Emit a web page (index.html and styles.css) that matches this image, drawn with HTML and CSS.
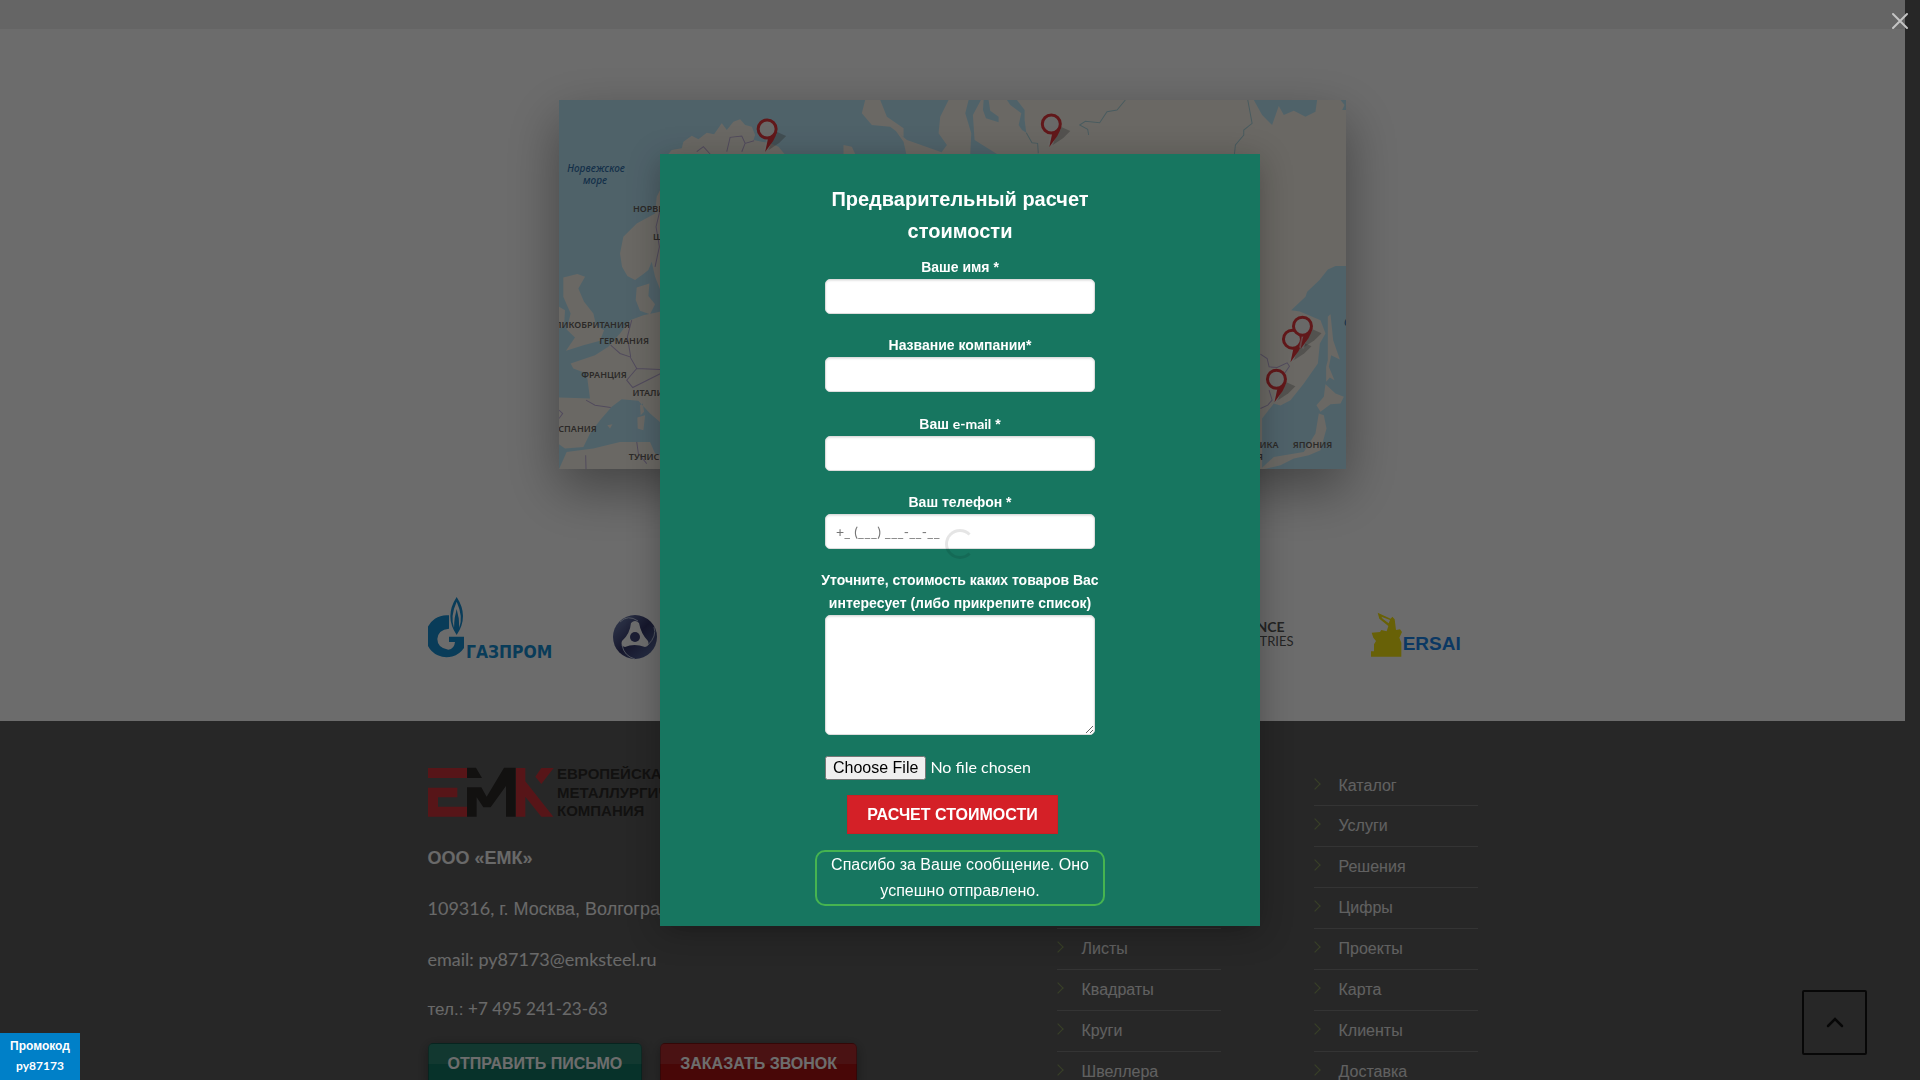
FILE: index.html
```html
<!DOCTYPE html>
<html lang="ru">
<head>
<meta charset="utf-8">
<meta name="viewport" content="width=device-width, initial-scale=1">
<title>Европейская металлургическая компания</title>
<link rel="stylesheet" href="styles.css">
</head>
<body>
<div class="page">
  <main class="main">
    <div class="strip"></div>
    <section class="geography">
      <svg class="map" viewBox="0 0 787 369" role="img" aria-label="Карта поставок">
        <defs>
          <g id="pin">
            <path d="M0 33L10 14L19 18L12 25Z" fill="#555" opacity=".35"/>
            <path d="M-1 33L2 20" stroke="#fff" stroke-width="5" opacity=".5"/>
            <circle r="9" fill="#f6f4f2" cy="11" stroke="#e22b31" stroke-width="3"/>
            <path d="M10 13Q9 18 6 23L-2 34L1 20Q6 18 9 13Z" fill="#e22b31"/>
          </g>
        </defs>
        <rect width="787" height="369" fill="#b5e4f6"/>
        <g transform="translate(-19 -20) scale(.33333)" fill="#f8f3e8">
          <path d="M385 222L395 210L425 205L430 185L455 167L475 178L500 158L522 163L545 130L560 150L580 125L600 118L615 135L635 140L645 165L640 180L690 190L715 200L740 230L740 640H365L345 590L335 545L325 570L310 582L285 600L262 588L246 560L240 520L250 470L290 430L345 400L350 350L360 330Z"/>
          <path d="M70 592L112 582L135 590L115 625L132 665L160 700L168 735L192 750L180 782L130 795L78 812L105 772L80 748L92 700L70 650ZM57 680L75 690L72 738L57 745ZM290 622L328 610L325 648L345 672L330 702L300 692L287 660Z"/>
          <path d="M380 690L310 705L270 720L240 760L205 800L165 825L92 850L100 865L140 880L150 955L57 952V1092L75 1105L130 1100L150 1060L180 1020L215 980L245 957L295 962L330 1000L365 1030L380 1030ZM57 1167L80 1115L160 1105L240 1085L330 1085L345 1120L380 1130V1167ZM300 975L308 970L312 995L302 1005ZM292 1012L315 1005L310 1050L293 1045ZM202 1035L217 1032L210 1045Z"/>
          <g fill="none" stroke="#b9a9d6" stroke-width="3">
            <path d="M470 215L490 200L510 222M560 215L570 172L605 168L615 190L605 215M615 190L642 182M360 390L348 440L358 500L345 560M212 795L240 820L270 830L290 865L360 868M290 865L260 900L278 922L362 880M138 960L165 975L212 982M290 1085L295 1120L320 1150M137 1125L138 1167M57 990L68 1000L57 1015M275 720L262 770L272 830"/>
          </g>
        </g>
        <g transform="translate(281 -10) scale(.33333)">
          <path fill="#f8f3e8" d="M75 30H120L140 80L190 115L190 140L150 110L95 105L65 70ZM165 120L200 150L300 185L330 200H200L190 155ZM10 165L35 170L45 192H10ZM325 30H1520V192H300L320 165L295 130L300 80ZM1100 190H1520V1150H1100Z"/>
          <path fill="#b5e4f6" d="M385 30H422L398 75L403 150L470 192H390L393 130L375 70ZM430 30H445L450 62L475 80L475 97L437 85L428 60ZM500 30H530L553 60L553 90L558 128L545 120L535 105L543 70L510 45ZM1240 30H1430L1425 65L1395 80L1360 62L1330 75L1315 48L1295 105L1265 75ZM1500 30H1520V60H1505L1512 45Z"/>
          <path fill="none" stroke="#a5d2dc" stroke-width="3" d="M855 30L830 60L800 65L778 98L735 94L718 105L742 118L745 135M558 128L575 158L592 160L594 190M1222 30L1235 100L1210 120V135L1185 165L1182 192"/>
        </g>
        <g transform="translate(681 -20) scale(.33333)">
          <path fill="#b5e4f6" d="M318 558H285L262 568L237 600L200 635L195 650L152 690L178 694L240 720L255 760L238 790L232 850L190 910L150 960L120 976L100 970L65 1015V1167H318Z"/>
          <path fill="#f8f3e8" d="M262 710L270 702L278 780L298 838L272 825L265 860L282 900L268 892L257 905V860L262 840ZM255 912L285 940L310 950L300 970L270 972L240 995L228 975L250 950ZM235 1000L250 1005L258 1045L240 1110L205 1125L160 1135L120 1155L70 1167H60L100 1130L190 1115L225 1060Z"/>
          <path fill="none" stroke="#b9a9d6" stroke-width="3" d="M60 822L80 835L86 860L110 862L140 848L147 858L132 880M86 930L95 960L82 975L60 985"/>
        </g>
        <g class="sea-name"><text x="37" y="72">Норвежское</text><text x="36" y="84">море</text><text x="788" y="226">О</text></g>
        <g class="country">
          <text x="98" y="112">НОРВЕГИЯ</text><text x="114" y="140">ШВЕЦИЯ</text><text x="28" y="228">ВЕЛИКОБРИТАНИЯ</text>
          <text x="65" y="244">ГЕРМАНИЯ</text><text x="45" y="278">ФРАНЦИЯ</text><text x="92" y="296">ИТАЛИЯ</text>
          <text x="15" y="332">ИСПАНИЯ</text><text x="85" y="360">ТУНИС</text><text x="753" y="348">ЯПОНИЯ</text>
          <text x="689" y="348">РЕСПУБЛИКА</text><text x="689" y="360">КОРЕЯ</text>
        </g>
        <use href="#pin" x="208" y="18"/><use href="#pin" x="492" y="13"/>
        <use href="#pin" x="733" y="228"/><use href="#pin" x="743" y="215"/><use href="#pin" x="717" y="268"/>
      </svg>
    </section>
    <section class="partners">
      <svg class="partner" width="126" height="64" viewBox="84 52 378 192" role="img" aria-label="Газпром">
        <g fill="#0784cc">
          <path d="M147 107A63 63 0 1 0 192 205V171H147V187H165Q163 208 145 210Q112 205 112 178Q114 150 147 147Z"/>
          <path fill-rule="evenodd" d="M170 52Q208 110 170 166Q132 110 170 52ZM170 66Q150 110 162 144Q162 115 170 88Q178 115 178 144Q190 110 170 66Z"/>
          <path d="M170 100Q182 130 170 158Q158 130 170 100Z"/>
          <text x="198" y="234" class="gazprom-name">ГАЗПРОМ</text>
        </g>
      </svg>
      <svg class="partner partner-atom" width="46" height="46" viewBox="0 0 46 46" role="img" aria-label="Росатом">
        <defs><linearGradient id="atom" x1="0" y1="0" x2="1" y2="1"><stop offset="0" stop-color="#6f83b5"/><stop offset=".5" stop-color="#26295e"/><stop offset="1" stop-color="#5a70a8"/></linearGradient></defs>
        <circle cx="23" cy="23" r="22" fill="url(#atom)"/>
        <g fill="none" stroke="#b9c3dc"><path d="M26 7Q16 0 8 8M36 31Q45 22 42 13M10 31Q12 42 23 45"/></g>
        <path fill="#fff" d="M19 9Q23 5 27 9Q29 20 36 27Q38 32 33 33Q22 29 13 33Q8 32 10 27Q18 20 19 9Z"/>
        <circle cx="23" cy="23" r="5" fill="#333a72"/>
      </svg>
      <div class="reliance"><b>RELIANCE</b><span>INDUSTRIES</span></div>
      <svg class="partner partner-ersai" width="90" height="46" viewBox="393 98 270 138" role="img" aria-label="Ersai">
        <path fill="#f3e000" d="M393 216H402V195L408 185L400 175L395 160L420 158L424 152L440 156L445 140L418 118L413 100L452 118L457 112L464 120L468 152L480 150L486 158L478 175L484 190V232H393ZM424 112L428 118L446 132L450 122Z"/>
        <text x="488" y="213" class="ersai-name">ERSAI</text>
      </svg>
    </section>
  </main>
  <footer class="footer">
    <div class="company">
      <svg class="logo" width="260" height="52" viewBox="84 562 780 156" role="img" aria-label="ЕМК">
        <path fill="#c8252b" d="M84 568H201V598H84ZM84 627H172V656H114V684H201V714H84ZM347 568H376V608L460 714H424L376 654V714H347ZM424 568H461L424 616L406 594Z"/>
        <path fill="#1c1a18" d="M201 567H228L246 598H201ZM201 626H244L260 654L312 567H347V714H318V622L272 686H250L230 656V714H201Z"/>
        <g class="logo-name"><text x="471" y="600">ЕВРОПЕЙСКАЯ</text><text x="471" y="657">МЕТАЛЛУРГИЧЕСКАЯ</text><text x="471" y="713">КОМПАНИЯ</text></g>
      </svg>
      <p><strong>ООО «ЕМК»</strong></p>
      <p><span class="latin">109316,</span> г. Москва, Волгоградский проспект</p>
      <p class="latin">email: py87173@emksteel.ru</p>
      <p class="phone">тел.: <span class="latin">+7 495 241-23-63</span></p>
      <div class="actions">
        <button type="button" class="glossy glossy-green">Отправить письмо</button>
        <button type="button" class="glossy glossy-red">Заказать звонок</button>
      </div>
    </div>
    <ul class="menu">
      <li><a href="#">Трубы</a></li><li><a href="#">Балки</a></li><li><a href="#">Арматура</a></li><li><a href="#">Уголки</a></li>
      <li><a href="#">Листы</a></li><li><a href="#">Квадраты</a></li><li><a href="#">Круги</a></li><li><a href="#">Швеллера</a></li>
    </ul>
    <ul class="menu">
      <li><a href="#">Каталог</a></li><li><a href="#">Услуги</a></li><li><a href="#">Решения</a></li><li><a href="#">Цифры</a></li>
      <li><a href="#">Проекты</a></li><li><a href="#">Карта</a></li><li><a href="#">Клиенты</a></li><li><a href="#">Доставка</a></li>
    </ul>
  </footer>
</div>
<a href="#" class="to-top" aria-label="Наверх"><svg width="18" height="11" viewBox="0 0 18 11"><path d="M2 9L9 2L16 9" fill="none" stroke="#000" stroke-width="2.5" stroke-linecap="round"/></svg></a>

<div class="overlay">
  <div class="modal" role="dialog" aria-modal="true" aria-labelledby="modal-title">
    <form class="quote">
      <h2 id="modal-title">Предварительный расчет стоимости</h2>
      <label for="name">Ваше имя *</label>
      <input class="field" type="text" id="name">
      <label for="company">Название компании*</label>
      <input class="field" type="text" id="company">
      <label for="email">Ваш <span class="latin">e-mail</span> *</label>
      <input class="field" type="email" id="email">
      <label for="phone">Ваш телефон *</label>
      <input class="field" type="tel" id="phone" placeholder="+_ (___) ___-__-__">
      <label for="details">Уточните, стоимость каких товаров Вас интересует (либо прикрепите список)</label>
      <textarea class="field" id="details"></textarea>
      <input class="file" type="file" aria-label="Прикрепить список">
      <button type="submit" class="submit">Расчет стоимости</button>
      <p class="sent" role="status">Спасибо за Ваше сообщение. Оно успешно отправлено.</p>
    </form>
  </div>
  <span class="spinner"></span>
  <button type="button" class="close" aria-label="Закрыть"><svg width="18" height="18" viewBox="0 0 18 18"><path d="M2 2L16 16M16 2L2 16" stroke="#c4c4c4" stroke-width="2" stroke-linecap="round"/></svg></button>
</div>
<aside class="promo"><span>Промокод</span><span class="latin">py87173</span></aside>
</body>
</html>
```

FILE: styles.css
```css
* { box-sizing: border-box; }

body {
  margin: 0;
  height: 100vh;
  overflow: hidden;
  background: #515151;
  color: #fff;
  font: 16px/26px "Liberation Sans", Arial, sans-serif;
}

a { color: inherit; text-decoration: none; }
button, input, textarea { font: inherit; }
.latin { font-family: Lato, "Liberation Sans", sans-serif; }

/* the page keeps room for the scrollbar while the dialog is open */
.page { margin-right: 15px; }
.main { background: #fdfdfd; }
.strip { height: 29px; background: #ececec; }

.geography { padding: 71px 15px 0; }
.map {
  display: block;
  width: 42%;
  margin: 0 auto;
  box-shadow: 0 20px 50px rgba(0, 0, 0, .4);
}
.country { font: 600 9px "Noto Sans", sans-serif; fill: #5c5753; text-anchor: middle; }
.sea-name { font: italic 500 10px "Noto Sans", sans-serif; fill: #2467a6; text-anchor: middle; }

.partners {
  display: flex;
  align-items: center;
  max-width: 1050px;
  margin: 0 auto;
  padding: 128px 0 60px;
}
.partner { flex: none; }
.partner-atom { margin: 16px 0 0 58px; }
.gazprom-name { font: bold 52px "DejaVu Sans Condensed", "Liberation Sans", sans-serif; }
.ersai-name { font: bold 57px "Liberation Sans", sans-serif; fill: #0b7be6; }
.reliance {
  display: flex;
  flex-direction: column;
  margin: 10px 77px 0 auto;
  color: #4a4a4a;
  text-align: right;
  font: 13px/14px Lato, sans-serif;
}
.reliance b { padding-right: 9px; font-size: 14px; }
.partner-ersai { margin: 12px 17px 0 0; }

.footer {
  display: grid;
  grid-template-columns: 1fr 164px 164px;
  column-gap: 93px;
  max-width: 1050px;
  margin: 0 auto;
  padding-top: 45px;
}
.company { min-width: 0; color: #f4f4f4; font-size: 18px; line-height: 29px; }
.company p { margin: 0 0 21px; white-space: nowrap; }
.company .phone { margin-bottom: 20px; font-size: 17px; line-height: 27px; }
.logo { display: block; margin-bottom: 26px; }
.logo-name { font: bold 45px "Liberation Sans", sans-serif; fill: #1c1a18; }
.actions { display: flex; gap: 18px; }

.glossy {
  height: 42px;
  padding: 0 19px;
  border: 1px solid rgba(0, 0, 0, .3);
  border-radius: 5px;
  color: #fff;
  font-size: 16px;
  font-weight: bold;
  line-height: 38px;
  text-transform: uppercase;
  box-shadow: 0 3px 12px rgba(0, 0, 0, .4);
}
.glossy-green { background: linear-gradient(#1c7a67 50%, #006b58 50%); }
.glossy-red { background: linear-gradient(#a81c20 50%, #a30000 50%); }

.menu { margin: 0; padding: 0; list-style: none; color: #e0e0e0; }
.menu li {
  display: flex;
  align-items: center;
  height: 41px;
  border-bottom: 1px solid #707070;
}
.menu li:first-child { height: 40px; }
.menu li::before {
  content: "";
  width: 7px;
  height: 7px;
  margin: 0 20px 4px -3px;
  border: solid #7c9050;
  border-width: 1px 1px 0 0;
  transform: rotate(45deg);
}

.to-top {
  position: fixed;
  right: 53px;
  bottom: 25px;
  display: grid;
  place-items: center;
  width: 65px;
  height: 65px;
  border: 2px solid #000;
  border-radius: 2px;
}

.overlay {
  position: fixed;
  inset: 0;
  display: grid;
  place-items: center;
  background: rgba(11, 11, 11, .6);
}
.modal {
  width: 600px;
  max-width: 100%;
  padding: 29px 0 20px;
  background: #177660;
  box-shadow: 0 6px 30px rgba(0, 0, 0, .3);
}
.quote { width: 290px; margin: 0 auto; display: flex; flex-direction: column; align-items: center; }
.quote h2 { margin: 0 0 9px; font-size: 20px; line-height: 32px; text-align: center; }
.quote label { font-size: 14px; font-weight: bold; line-height: 23px; text-align: center; }
.field {
  width: 270px;
  height: 35px;
  margin: 0 0 20px;
  padding: 0 10px;
  border: 1px solid #ddd;
  border-radius: 5px;
  background: #fff;
  color: #333;
  font: 14px Lato, "Liberation Sans", sans-serif;
  box-shadow: inset 0 1px 2px rgba(0, 0, 0, .1);
}
.field::placeholder { color: #757575; }
textarea.field { height: 120px; margin-bottom: 19px; padding: 10px; resize: vertical; }
.file { width: 270px; height: 26px; margin-bottom: 15px; font-family: Lato, sans-serif; }
.file::file-selector-button { font: 16px "Liberation Sans", sans-serif; }
.submit {
  height: 39px;
  margin: 0 15px 16px 0;
  padding: 0 19px;
  border: 1px solid #c81f24;
  background: #d42027;
  color: #fff;
  font-size: 16px;
  font-weight: bold;
  text-transform: uppercase;
}
.sent {
  width: 290px;
  margin: 0;
  padding: 0 14px;
  border: 2px solid #46b450;
  border-radius: 10px;
  text-align: center;
}

.spinner {
  position: absolute;
  top: 50%;
  left: 50%;
  width: 30px;
  height: 30px;
  margin: -11px 0 0 -15px;
  border: 3px solid rgba(0, 0, 0, .1);
  border-right-color: transparent;
  border-radius: 50%;
}
.close {
  position: absolute;
  top: 12px;
  right: 11px;
  width: 18px;
  height: 18px;
  padding: 0;
  border: 0;
  background: none;
}
.close svg { display: block; }

.promo {
  position: fixed;
  left: 0;
  bottom: 0;
  display: flex;
  flex-direction: column;
  width: 80px;
  padding: 4px 0 5px;
  background: #0080c8;
  font-size: 12px;
  font-weight: bold;
  line-height: 19px;
  text-align: center;
}
```
